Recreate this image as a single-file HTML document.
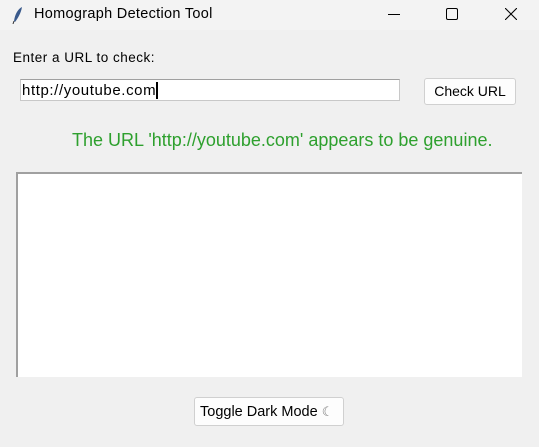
<!DOCTYPE html>
<html><head><style>
body{margin:0;width:539px;height:447px;background:#f0f0f0;font-family:"Liberation Sans",sans-serif;position:relative;overflow:hidden}
div,span{position:absolute;white-space:nowrap}
.t{font-size:13px;color:#000}
.btn{background:#fdfdfd;border:1px solid #d0d0d0;border-radius:3px;font-size:14px;color:#000;text-align:center;box-sizing:border-box}
</style></head><body>
<div style="left:0;top:0;width:539px;height:30px;background:#f3f3f3"></div>
<svg style="position:absolute;left:12px;top:6px" width="12" height="18" viewBox="0 0 12 18"><path d="M10 1 C6 3 3 8 2 15 L3 16 C6 12 9 7 10 1Z" fill="#3a5a8c"/><path d="M2 15 L1 18" stroke="#333" stroke-width="1"/></svg>
<span class="t" style="left:34px;top:6px;font-size:14.5px;letter-spacing:0.3px">Homograph Detection Tool</span>
<div style="left:388px;top:14px;width:12px;height:1px;background:#000"></div>
<div style="left:446px;top:8px;width:10px;height:10px;border:1px solid #000;border-radius:2px"></div>
<svg style="position:absolute;left:505px;top:8px" width="12" height="12"><path d="M0 0L12 12M12 0L0 12" stroke="#000" stroke-width="1.1"/></svg>
<span class="t" style="left:13px;top:50px;font-size:13.5px;letter-spacing:0.5px">Enter a URL to check:</span>
<div style="left:20px;top:79px;width:380px;height:22px;background:#fff;border:1px solid #c8c8c8;border-top-color:#a0a0a0;box-sizing:border-box"></div>
<span class="t" style="left:22px;top:82px;font-size:15px;letter-spacing:0.6px">http://youtube.com</span>
<div style="left:156px;top:82px;width:2px;height:17px;background:#000"></div>
<div class="btn" style="left:424px;top:78px;width:92px;height:27px;line-height:25px">Check URL</div>
<span style="left:72px;top:130px;font-size:18px;color:#2ea02e">The URL 'http://youtube.com' appears to be genuine.</span>
<div style="left:16px;top:172px;width:506px;height:205px;background:#fff;border-left:2px solid #a0a0a0;border-top:2px solid #a0a0a0;box-sizing:border-box"></div>
<div class="btn" style="left:194px;top:397px;width:150px;height:29px;line-height:27px;text-align:left;padding-left:5px;font-size:14.5px">Toggle Dark Mode <span style="position:static;color:#777;font-size:13px">☾</span></div>
</body></html>
